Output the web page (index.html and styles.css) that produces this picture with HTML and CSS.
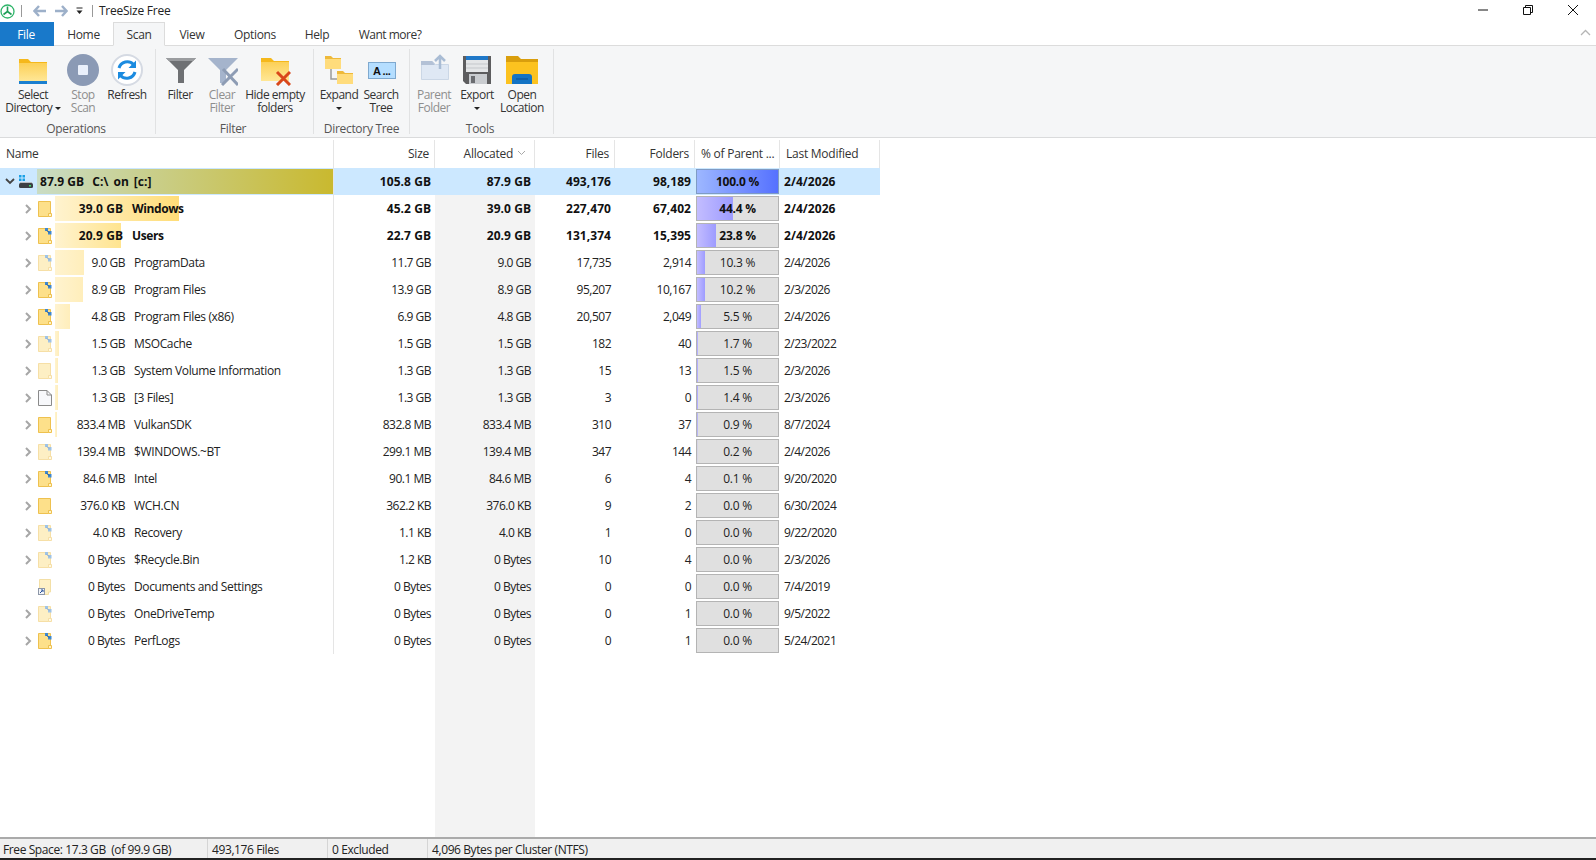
FILE: index.html
```html
<!DOCTYPE html>
<html lang="en">
  <head>
    <meta charset="UTF-8" />
    <title>TreeSize Free</title>
    <link rel="stylesheet" href="styles.css">
  </head>
  <body>
    <svg class="defs" width="0" height="0">
      <defs>
        <linearGradient id="fold" x1="0" y1="0" x2="0" y2="1">
          <stop offset="0" stop-color="#fcd057"/>
          <stop offset="1" stop-color="#ffe796"/>
        </linearGradient>
        <symbol id="folder" viewBox="0 0 14 16">
          <path d="M.5.5h12v12.500h-2v2.500h-10z" fill="#fde08a" stroke="#eec14f"/>
          <path d="M10.500 15.500v-3h3v3z" fill="#fff3c8" stroke="#eec14f"/>
        </symbol>
        <symbol id="folder-sys" viewBox="0 0 14 16">
          <path d="M.5.5h12v12.500h-2v2.500h-10z" fill="#fde08a" stroke="#eec14f"/>
          <path d="M10.500 15.500v-3h3v3z" fill="#fff3c8" stroke="#eec14f"/>
          <path d="M7 0h3v3h-3zM10 3h3.500v3.500h-3.500z" fill="#3f88cf"/>
          <path d="M8.500 2.500l3 2" stroke="#2a5f9e" fill="none"/>
        </symbol>
        <symbol id="file" viewBox="0 0 14 16">
          <path d="M.5.5h8.500l4.500 4.500v10.500h-13z" fill="#f7f8fb" stroke="#8a8a8a"/>
          <path d="M9 .5v4.500h4.500" fill="none" stroke="#8a8a8a"/>
        </symbol>
        <symbol id="chev" viewBox="0 0 8 10">
          <path d="M2 1l4 4-4 4" fill="none" stroke="#a6a6a6" stroke-width="2"/>
        </symbol>
      </defs>
    </svg>

    <header class="titlebar">
      <svg class="app-logo" width="15" height="15" viewBox="0 0 15 15">
        <circle cx="7.500" cy="7.500" r="6.500" fill="#fff" stroke="#2fb56a" stroke-width="1.300"/>
        <path d="M7.500 2.500v5l-4 3M7.500 7.500l4 3" fill="none" stroke="#1f9d58" stroke-width="1.600"/>
      </svg>
      <span class="bar-sep"></span>
      <svg class="nav-arrow" width="14" height="12" viewBox="0 0 14 12"><path d="M6 1L1.500 6 6 11M1.500 6H13" fill="none" stroke="#9db0c9" stroke-width="2.400"/></svg>
      <svg class="nav-arrow" width="14" height="12" viewBox="0 0 14 12"><path d="M8 1l4.500 5L8 11M12.500 6H1" fill="none" stroke="#9db0c9" stroke-width="2.400"/></svg>
      <svg class="qat-drop" width="7" height="8" viewBox="0 0 7 8"><path d="M.5 1h6" stroke="#222"/><path d="M.5 3.500h6L3.500 7z" fill="#222"/></svg>
      <span class="bar-sep"></span>
      <span class="app-title">TreeSize Free</span>
      <div class="win-btns">
        <svg width="12" height="12" viewBox="0 0 12 12"><path d="M1 6h10" stroke="#111"/></svg>
        <svg width="12" height="12" viewBox="0 0 12 12"><path d="M1.500 3.500h7v7h-7zM3.500 3.500v-2h7v7h-2" fill="none" stroke="#111"/></svg>
        <svg width="12" height="12" viewBox="0 0 12 12"><path d="M1 1l10 10M11 1L1 11" stroke="#111"/></svg>
      </div>
    </header>

    <nav class="tabs">
      <a class="tab file">File</a>
      <a class="tab home">Home</a>
      <a class="tab scan active">Scan</a>
      <a class="tab view">View</a>
      <a class="tab options">Options</a>
      <a class="tab help">Help</a>
      <a class="tab more">Want more?</a>
      <svg class="collapse" width="11" height="7" viewBox="0 0 11 7"><path d="M1 6l4.500-4.500L10 6" fill="none" stroke="#b5b5b5" stroke-width="1.300"/></svg>
    </nav>

    <section class="ribbon">
      <div class="group ops">
        <div class="group-items">
          <div class="rbtn w66">
            <svg class="ricon" width="32" height="32" viewBox="0 0 32 32">
              <path d="M2 5h9l3 3h16v20H2z" fill="#f5b81c"/>
              <rect x="2" y="9" width="28" height="18" fill="url(#fold)"/>
              <rect x="2" y="27" width="28" height="3" fill="#1a7fd0"/>
            </svg>
            <span>Select<br>Directory <i class="drop"></i></span>
          </div>
          <div class="rbtn w34 off">
            <svg class="ricon" width="32" height="32" viewBox="0 0 32 32">
              <circle cx="16" cy="16" r="16" fill="#8b9ab5"/>
              <rect x="11" y="11" width="10" height="10" rx="1" fill="#eaf0fb"/>
            </svg>
            <span>Stop<br>Scan</span>
          </div>
          <div class="rbtn w54">
            <svg class="ricon" width="32" height="32" viewBox="0 0 32 32">
              <circle cx="16" cy="16" r="15" fill="#fff" stroke="#d5dae3" stroke-width="2"/>
              <path d="M8 14a8.500 8.500 0 0 1 14.500-3.500M24 18a8.500 8.500 0 0 1-14.500 3.500" fill="none" stroke="#1b8be0" stroke-width="3"/>
              <path d="M25 6.500v7.500h-7.500zM7 25.500V18h7.500z" fill="#1b8be0"/>
            </svg>
            <span>Refresh</span>
          </div>
        </div>
        <div class="group-label">Operations</div>
      </div>

      <div class="group filter">
        <div class="group-items">
          <div class="rbtn w48">
            <svg class="ricon" width="32" height="32" viewBox="0 0 32 32">
              <path d="M2 4h30L20 16v13h-6V16z" fill="#6e7073"/>
              <path d="M2 4h30l-3 3H5z" fill="#9a9c9f"/>
            </svg>
            <span>Filter</span>
          </div>
          <div class="rbtn w36 off">
            <svg class="ricon" width="32" height="32" viewBox="0 0 32 32">
              <path d="M2 4h30L20 16v13h-6V16z" fill="#a5b4cc"/>
              <path d="M16 31L32 15M17 15l15 16" stroke="#8d9cb4" stroke-width="3" fill="none"/>
            </svg>
            <span>Clear<br>Filter</span>
          </div>
          <div class="rbtn w70">
            <svg class="ricon" width="32" height="32" viewBox="0 0 32 32">
              <path d="M2 4h10l3 3h15v4H2z" fill="#f5b81c"/>
              <rect x="2" y="8" width="28" height="19" fill="url(#fold)"/>
              <path d="M18 18l13 13M31 18L18 31" stroke="#d9471a" stroke-width="3"/>
            </svg>
            <span>Hide empty<br>folders</span>
          </div>
        </div>
        <div class="group-label">Filter</div>
      </div>

      <div class="group tree">
        <div class="group-items">
          <div class="rbtn w50">
            <svg class="ricon" width="32" height="32" viewBox="0 0 32 32">
              <path d="M8 15v10h6" fill="none" stroke="#9a9a9a" stroke-width="1.500"/>
              <path d="M2 2h6l2 2h8v11H2z" fill="#eeb93a"/><rect x="2" y="5" width="16" height="10" fill="#ffdc7c"/>
              <path d="M14 17h6l2 2h8v11H14z" fill="#eeb93a"/><rect x="14" y="20" width="16" height="10" fill="#ffdc7c"/>
            </svg>
            <span>Expand<br><i class="drop"></i></span>
          </div>
          <div class="rbtn w34">
            <svg class="ricon" width="32" height="32" viewBox="0 0 32 32">
              <rect x="3.500" y="8.500" width="27" height="16" fill="#b5deff" stroke="#7fa9cf"/>
              <text x="8" y="21" class="icon-text">A ...</text>
            </svg>
            <span>Search<br>Tree</span>
          </div>
        </div>
        <div class="group-label">Directory Tree</div>
      </div>

      <div class="group tools">
        <div class="group-items">
          <div class="rbtn w48 off">
            <svg class="ricon" width="32" height="32" viewBox="0 0 32 32">
              <path d="M3.500 7.500h11l3 3h13v15h-27z" fill="#dfe8f4" stroke="#cbd7e6"/>
              <path d="M3 7h11l3 4H3z" fill="#b3c1d6"/>
              <path d="M22 15V2M17 7l5-5 5 5" fill="none" stroke="#a9bcd4" stroke-width="2.500"/>
            </svg>
            <span>Parent<br>Folder</span>
          </div>
          <div class="rbtn w38">
            <svg class="ricon" width="32" height="32" viewBox="0 0 32 32">
              <path d="M2 2h28v28H5l-3-3z" fill="#5d5d5f"/>
              <rect x="5" y="2" width="22" height="4" fill="#1f78c8"/>
              <rect x="5" y="6" width="22" height="12" fill="#e4e6e8"/>
              <path d="M5 10h22M5 14h22" stroke="#c4c7cb"/>
              <rect x="8" y="20" width="18" height="10" fill="#c9ccd0"/>
              <rect x="10" y="22" width="4" height="7" fill="#6a6c70"/>
            </svg>
            <span>Export<br><i class="drop"></i></span>
          </div>
          <div class="rbtn w52">
            <svg class="ricon" width="32" height="32" viewBox="0 0 32 32">
              <path d="M0 2h12l3 3h17v5H0z" fill="#d99e0d"/>
              <path d="M0 8h32v22H0z" fill="#fcc21f"/>
              <path d="M6 23a3 3 0 0 1 3-3h14a3 3 0 0 1 3 3v7H6z" fill="#1473c4"/>
              <path d="M10 25h12" stroke="#0b4f91"/>
            </svg>
            <span>Open<br>Location</span>
          </div>
        </div>
        <div class="group-label">Tools</div>
      </div>
    </section>

    <main class="table">
      <div class="row head">
        <div class="th name">Name</div>
        <div class="th">Size</div>
        <div class="th">Allocated <svg class="sort" width="9" height="6" viewBox="0 0 9 6"><path d="M1 1l3.500 3.500L8 1" fill="none" stroke="#a8a8a8"/></svg></div>
        <div class="th">Files</div>
        <div class="th">Folders</div>
        <div class="th pct-h">% of Parent ...</div>
        <div class="th th-date">Last Modified</div>
      </div>

      <div class="tree-body">
        <div class="row root">
          <div class="name-cell">
            <svg class="root-chev" width="10" height="7" viewBox="0 0 10 7"><path d="M1 1l4 4 4-4" fill="none" stroke="#444" stroke-width="1.800"/></svg>
            <svg class="drive" width="16" height="16" viewBox="0 0 16 16">
              <path d="M1 1h2.500v2.500H1zM4.500 1H7v2.500H4.500zM1 4.500h2.500V7H1zM4.500 4.500H7V7H4.500z" fill="#19a0e6"/>
              <rect x="1" y="9" width="14" height="5" rx="1.500" fill="#3c3f44"/>
              <path d="M2 8.500h12" stroke="#b8bcc2"/>
              <rect x="11" y="11" width="2" height="1.500" fill="#3fe06a"/>
            </svg>
            <div class="size-bar root-bar"><span class="root-label"><span class="root-size">87.9 GB</span><span>C:\</span><span>on</span><span>[c:]</span></span></div>
          </div>
          <div class="num">105.8 GB</div><div class="num">87.9 GB</div><div class="num">493,176</div><div class="num">98,189</div>
          <div class="pct-cell"><div class="pct root-pct">100.0 %</div></div>
          <div class="date">2/4/2026</div>
        </div>

        <div class="row bold">
          <div class="name-cell"><svg class="chev"><use href="#chev"/></svg><svg class="ficon"><use href="#folder"/></svg>
            <div class="size-bar big" style="background-size:124px 100%"><span class="sz">39.0 GB</span><span class="nm">Windows</span></div></div>
          <div class="num">45.2 GB</div><div class="num">39.0 GB</div><div class="num">227,470</div><div class="num">67,402</div>
          <div class="pct-cell"><div class="pct" style="background-size:44.4% 100%">44.4 %</div></div>
          <div class="date">2/4/2026</div>
        </div>
        <div class="row bold">
          <div class="name-cell"><svg class="chev"><use href="#chev"/></svg><svg class="ficon"><use href="#folder-sys"/></svg>
            <div class="size-bar mid" style="background-size:66px 100%"><span class="sz">20.9 GB</span><span class="nm">Users</span></div></div>
          <div class="num">22.7 GB</div><div class="num">20.9 GB</div><div class="num">131,374</div><div class="num">15,395</div>
          <div class="pct-cell"><div class="pct" style="background-size:23.8% 100%">23.8 %</div></div>
          <div class="date">2/4/2026</div>
        </div>
        <div class="row">
          <div class="name-cell"><svg class="chev"><use href="#chev"/></svg><svg class="ficon pale"><use href="#folder-sys"/></svg>
            <div class="size-bar" style="background-size:29px 100%"><span class="sz">9.0 GB</span><span class="nm">ProgramData</span></div></div>
          <div class="num">11.7 GB</div><div class="num">9.0 GB</div><div class="num">17,735</div><div class="num">2,914</div>
          <div class="pct-cell"><div class="pct" style="background-size:10.3% 100%">10.3 %</div></div>
          <div class="date">2/4/2026</div>
        </div>
        <div class="row">
          <div class="name-cell"><svg class="chev"><use href="#chev"/></svg><svg class="ficon"><use href="#folder-sys"/></svg>
            <div class="size-bar" style="background-size:28px 100%"><span class="sz">8.9 GB</span><span class="nm">Program Files</span></div></div>
          <div class="num">13.9 GB</div><div class="num">8.9 GB</div><div class="num">95,207</div><div class="num">10,167</div>
          <div class="pct-cell"><div class="pct" style="background-size:10.2% 100%">10.2 %</div></div>
          <div class="date">2/3/2026</div>
        </div>
        <div class="row">
          <div class="name-cell"><svg class="chev"><use href="#chev"/></svg><svg class="ficon"><use href="#folder-sys"/></svg>
            <div class="size-bar" style="background-size:15px 100%"><span class="sz">4.8 GB</span><span class="nm">Program Files (x86)</span></div></div>
          <div class="num">6.9 GB</div><div class="num">4.8 GB</div><div class="num">20,507</div><div class="num">2,049</div>
          <div class="pct-cell"><div class="pct" style="background-size:5.5% 100%">5.5 %</div></div>
          <div class="date">2/4/2026</div>
        </div>
        <div class="row">
          <div class="name-cell"><svg class="chev"><use href="#chev"/></svg><svg class="ficon pale"><use href="#folder-sys"/></svg>
            <div class="size-bar" style="background-size:4px 100%"><span class="sz">1.5 GB</span><span class="nm">MSOCache</span></div></div>
          <div class="num">1.5 GB</div><div class="num">1.5 GB</div><div class="num">182</div><div class="num">40</div>
          <div class="pct-cell"><div class="pct" style="background-size:1.7% 100%">1.7 %</div></div>
          <div class="date">2/23/2022</div>
        </div>
        <div class="row">
          <div class="name-cell"><svg class="chev"><use href="#chev"/></svg><svg class="ficon pale"><use href="#folder"/></svg>
            <div class="size-bar" style="background-size:3px 100%"><span class="sz">1.3 GB</span><span class="nm">System Volume Information</span></div></div>
          <div class="num">1.3 GB</div><div class="num">1.3 GB</div><div class="num">15</div><div class="num">13</div>
          <div class="pct-cell"><div class="pct" style="background-size:1.5% 100%">1.5 %</div></div>
          <div class="date">2/3/2026</div>
        </div>
        <div class="row">
          <div class="name-cell"><svg class="chev"><use href="#chev"/></svg><svg class="ficon"><use href="#file"/></svg>
            <div class="size-bar" style="background-size:3px 100%"><span class="sz">1.3 GB</span><span class="nm">[3 Files]</span></div></div>
          <div class="num">1.3 GB</div><div class="num">1.3 GB</div><div class="num">3</div><div class="num">0</div>
          <div class="pct-cell"><div class="pct" style="background-size:1.4% 100%">1.4 %</div></div>
          <div class="date">2/3/2026</div>
        </div>
        <div class="row">
          <div class="name-cell"><svg class="chev"><use href="#chev"/></svg><svg class="ficon"><use href="#folder"/></svg>
            <div class="size-bar" style="background-size:2px 100%"><span class="sz">833.4 MB</span><span class="nm">VulkanSDK</span></div></div>
          <div class="num">832.8 MB</div><div class="num">833.4 MB</div><div class="num">310</div><div class="num">37</div>
          <div class="pct-cell"><div class="pct" style="background-size:.9% 100%">0.9 %</div></div>
          <div class="date">8/7/2024</div>
        </div>
        <div class="row">
          <div class="name-cell"><svg class="chev"><use href="#chev"/></svg><svg class="ficon pale"><use href="#folder-sys"/></svg>
            <div class="size-bar" style="background-size:0 0"><span class="sz">139.4 MB</span><span class="nm">$WINDOWS.~BT</span></div></div>
          <div class="num">299.1 MB</div><div class="num">139.4 MB</div><div class="num">347</div><div class="num">144</div>
          <div class="pct-cell"><div class="pct" style="background-size:.2% 100%">0.2 %</div></div>
          <div class="date">2/4/2026</div>
        </div>
        <div class="row">
          <div class="name-cell"><svg class="chev"><use href="#chev"/></svg><svg class="ficon"><use href="#folder-sys"/></svg>
            <div class="size-bar" style="background-size:0 0"><span class="sz">84.6 MB</span><span class="nm">Intel</span></div></div>
          <div class="num">90.1 MB</div><div class="num">84.6 MB</div><div class="num">6</div><div class="num">4</div>
          <div class="pct-cell"><div class="pct" style="background-size:.1% 100%">0.1 %</div></div>
          <div class="date">9/20/2020</div>
        </div>
        <div class="row">
          <div class="name-cell"><svg class="chev"><use href="#chev"/></svg><svg class="ficon"><use href="#folder"/></svg>
            <div class="size-bar" style="background-size:0 0"><span class="sz">376.0 KB</span><span class="nm">WCH.CN</span></div></div>
          <div class="num">362.2 KB</div><div class="num">376.0 KB</div><div class="num">9</div><div class="num">2</div>
          <div class="pct-cell"><div class="pct" style="background-size:0 0">0.0 %</div></div>
          <div class="date">6/30/2024</div>
        </div>
        <div class="row">
          <div class="name-cell"><svg class="chev"><use href="#chev"/></svg><svg class="ficon pale"><use href="#folder-sys"/></svg>
            <div class="size-bar" style="background-size:0 0"><span class="sz">4.0 KB</span><span class="nm">Recovery</span></div></div>
          <div class="num">1.1 KB</div><div class="num">4.0 KB</div><div class="num">1</div><div class="num">0</div>
          <div class="pct-cell"><div class="pct" style="background-size:0 0">0.0 %</div></div>
          <div class="date">9/22/2020</div>
        </div>
        <div class="row">
          <div class="name-cell"><svg class="chev"><use href="#chev"/></svg><svg class="ficon pale"><use href="#folder-sys"/></svg>
            <div class="size-bar" style="background-size:0 0"><span class="sz">0 Bytes</span><span class="nm">$Recycle.Bin</span></div></div>
          <div class="num">1.2 KB</div><div class="num">0 Bytes</div><div class="num">10</div><div class="num">4</div>
          <div class="pct-cell"><div class="pct" style="background-size:0 0">0.0 %</div></div>
          <div class="date">2/3/2026</div>
        </div>
        <div class="row">
          <div class="name-cell"><span class="chev"></span>
            <svg class="ficon link" viewBox="0 0 14 16">
              <path d="M1.500.5h11v12.500h-2v2.500h-9z" fill="#fff1c6" stroke="#f3dfa6"/>
              <rect x=".5" y="9.500" width="6" height="6" fill="#f2f4f8" stroke="#8d97a8"/>
              <path d="M2 14l2.500-2.500M3 11h2v2" fill="none" stroke="#27509a"/>
            </svg>
            <div class="size-bar" style="background-size:0 0"><span class="sz">0 Bytes</span><span class="nm">Documents and Settings</span></div></div>
          <div class="num">0 Bytes</div><div class="num">0 Bytes</div><div class="num">0</div><div class="num">0</div>
          <div class="pct-cell"><div class="pct" style="background-size:0 0">0.0 %</div></div>
          <div class="date">7/4/2019</div>
        </div>
        <div class="row">
          <div class="name-cell"><svg class="chev"><use href="#chev"/></svg><svg class="ficon pale"><use href="#folder-sys"/></svg>
            <div class="size-bar" style="background-size:0 0"><span class="sz">0 Bytes</span><span class="nm">OneDriveTemp</span></div></div>
          <div class="num">0 Bytes</div><div class="num">0 Bytes</div><div class="num">0</div><div class="num">1</div>
          <div class="pct-cell"><div class="pct" style="background-size:0 0">0.0 %</div></div>
          <div class="date">9/5/2022</div>
        </div>
        <div class="row">
          <div class="name-cell"><svg class="chev"><use href="#chev"/></svg><svg class="ficon"><use href="#folder-sys"/></svg>
            <div class="size-bar" style="background-size:0 0"><span class="sz">0 Bytes</span><span class="nm">PerfLogs</span></div></div>
          <div class="num">0 Bytes</div><div class="num">0 Bytes</div><div class="num">0</div><div class="num">1</div>
          <div class="pct-cell"><div class="pct" style="background-size:0 0">0.0 %</div></div>
          <div class="date">5/24/2021</div>
        </div>
      </div>
    </main>

    <footer class="status">
      <div class="st st-free">Free Space: 17.3 GB &nbsp;(of 99.9 GB)</div>
      <div class="st st-files">493,176 Files</div>
      <div class="st st-excl">0 Excluded</div>
      <div class="st">4,096 Bytes per Cluster (NTFS)</div>
    </footer>
  </body>
</html>
```

FILE: styles.css
```css
* {
  box-sizing: border-box;
}

html, body {
  height: 100%;
}

body {
  margin: 0;
  display: flex;
  flex-direction: column;
  overflow: hidden;
  background: #fff;
  color: #222;
  font-family: "Open Sans", "Noto Sans", sans-serif;
  font-size: 12px;
  letter-spacing: -.25px;
}

.defs {
  display: block;
  height: 0;
}

/* title bar */
.titlebar {
  height: 22px;
  display: flex;
  align-items: center;
  flex: none;
}

.app-logo {
  margin-right: 6px;
}

.bar-sep {
  width: 1px;
  height: 12px;
  background: #999;
}

.nav-arrow {
  margin-left: 11px;
}

.nav-arrow + .nav-arrow {
  margin-left: 7px;
}

.qat-drop {
  margin: 0 9px 0 8px;
}

.app-title {
  margin-left: 6px;
  margin-top: -2px;
}

.win-btns {
  margin-left: auto;
  margin-top: -2px;
  display: flex;
  gap: 33px;
  padding-right: 17px;
}

/* tabs */
.tabs {
  height: 24px;
  display: flex;
  flex: none;
  align-items: stretch;
  border-bottom: 1px solid #dcdcdc;
  letter-spacing: -.32px;
}

.tab {
  display: flex;
  align-items: center;
  justify-content: center;
  color: #333;
  margin-bottom: -1px;
}

.tab.file {
  width: 54px;
  padding-right: 2px;
  background: #1979ca;
  color: #fff;
}

.tab.home { width: 59px; }
.tab.scan { width: 52px; }
.tab.view { width: 52px; padding-left: 2px; }
.tab.options { width: 74px; padding-left: 2px; }
.tab.help { width: 50px; padding-left: 2px; }
.tab.more { width: 92px; margin-left: 3px; letter-spacing: -.5px; }

.tab.active {
  background: #f5f6f7;
  border: 1px solid #dcdcdc;
  border-bottom: 1px solid #f5f6f7;
}

.collapse {
  margin-left: auto;
  margin-right: 5px;
  margin-top: 7px;
}

/* ribbon */
.ribbon {
  height: 92px;
  flex: none;
  display: flex;
  background: #f5f6f7;
  border-bottom: 1px solid #dadbdc;
}

.group {
  display: flex;
  flex-direction: column;
  border-right: 1px solid #e1e2e3;
  margin: 3px 0 3px;
}

.group.ops { width: 156px; }
.group.filter { width: 158px; }
.group.tree { width: 96px; }
.group.tools { width: 144px; }

.group-items {
  flex: 1;
  display: flex;
}

.group-label {
  text-align: center;
  color: #555;
  height: 16px;
  line-height: 22px;
  letter-spacing: -.3px;
}

.group.ops .group-label,
.group.filter .group-label,
.group.tools .group-label {
  padding-right: 3px;
}

.rbtn {
  display: flex;
  flex-direction: column;
  align-items: center;
  text-align: center;
  line-height: 13px;
  padding-top: 5px;
  color: #333;
  letter-spacing: -.5px;
}

.rbtn .ricon {
  margin-bottom: 2px;
  flex: none;
}

.rbtn.off {
  color: #8e8e8e;
}

.w34 { width: 34px; }
.w36 { width: 36px; }
.w38 { width: 38px; }
.w48 { width: 48px; }
.w50 { width: 50px; }
.w52 { width: 52px; }
.w54 { width: 54px; }
.w66 { width: 66px; }
.w70 { width: 70px; }

.drop {
  display: inline-block;
  width: 0;
  height: 0;
  border: 3px solid transparent;
  border-top: 3px solid #222;
  border-bottom: 0;
  vertical-align: 2px;
}

.icon-text {
  font: bold 11px "Liberation Sans", sans-serif;
  fill: #111;
}

/* table */
.table {
  flex: 1;
  min-height: 0;
  display: flex;
  flex-direction: column;
  padding-top: 2px;
}

.row {
  display: grid;
  grid-template-columns: 334px 101px 100px 80px 80px 85px 100px;
  width: 880px;
  height: 27px;
  align-items: center;
  letter-spacing: -.5px;
}

.row.head {
  height: 28px;
  letter-spacing: -.25px;
}

.th {
  height: 100%;
  display: flex;
  align-items: center;
  justify-content: flex-end;
  padding-right: 5px;
  padding-bottom: 2px;
  border-right: 1px solid #e5e5e5;
  color: #333;
}

.th.name,
.th.pct-h,
.th.th-date {
  justify-content: flex-start;
  padding-left: 6px;
  white-space: nowrap;
}

.sort {
  margin-left: 4px;
  margin-right: 3px;
}

.tree-body {
  flex: 1;
  background: linear-gradient(90deg, transparent 435px, #f3f3f3 435px, #f3f3f3 535px, transparent 535px);
}

.name-cell {
  height: 100%;
  display: flex;
  align-items: center;
  border-right: 1px solid #e5e5e5;
  white-space: nowrap;
}

.chev {
  width: 8px;
  height: 10px;
  margin-left: 24px;
  flex: none;
}

.ficon {
  width: 14px;
  height: 16px;
  margin-left: 6px;
  margin-right: 3px;
  flex: none;
}

.ficon.pale {
  opacity: .5;
}

.size-bar {
  flex: 1;
  height: 25px;
  display: flex;
  align-items: center;
  background-image: linear-gradient(90deg, #fff3cf, #ffeebb);
  background-repeat: no-repeat;
}

.size-bar.big {
  background-image: linear-gradient(90deg, #fff3cf, #ffdd78);
}

.size-bar.mid {
  background-image: linear-gradient(90deg, #fff3cf, #ffe48f);
}

.sz {
  width: 70px;
  text-align: right;
}

.nm {
  margin-left: 9px;
  letter-spacing: -.36px;
}

.bold .sz {
  width: 68px;
}

.bold {
  font-weight: 700;
  color: #111;
  letter-spacing: .05px;
}

.bold .nm {
  letter-spacing: -.4px;
}

.num {
  text-align: right;
  padding-right: 4px;
}

.pct-cell {
  height: 100%;
  padding: 1px 1px;
}

.pct {
  height: 25px;
  line-height: 23px;
  text-align: center;
  border: 1px solid #b4b4b4;
  background-color: #e0e0e0;
  background-image: linear-gradient(90deg, #c3bdff, #9d9bff);
  background-repeat: no-repeat;
  letter-spacing: -.25px;
}

.date {
  padding-left: 4px;
}

/* root row */
.row.root {
  background: #cce8ff;
  font-weight: 700;
  color: #111;
  letter-spacing: .05px;
}

.root-chev {
  margin-left: 5px;
  flex: none;
}

.drive {
  margin-left: 3px;
  margin-right: 3px;
  flex: none;
}

.root-bar {
  background-image: linear-gradient(90deg, #c9dcc4, #c9b92f);
  background-size: 100% 100%;
  padding-left: 3px;
}

.root-label {
  display: flex;
  gap: 5px;
}

.root-size {
  margin-right: 3px;
}

.root-pct {
  background-image: linear-gradient(90deg, #9db7ff, #5571ff);
  border-color: #7f9bc4;
}

/* status bar */
.status {
  height: 23px;
  flex: none;
  display: flex;
  align-items: center;
  background: #f0f0f0;
  border-top: 2px solid #aaa;
  border-bottom: 2px solid #222;
  color: #222;
  letter-spacing: -.4px;
}

.st {
  height: 100%;
  padding-left: 4px;
  line-height: 21px;
  border-right: 1px solid #d5d5d5;
}

.st-free {
  padding-left: 3px;
}

.st:last-child {
  border-right: 0;
}

.st-free { width: 208px; }
.st-files { width: 120px; }
.st-excl { width: 100px; }
```
